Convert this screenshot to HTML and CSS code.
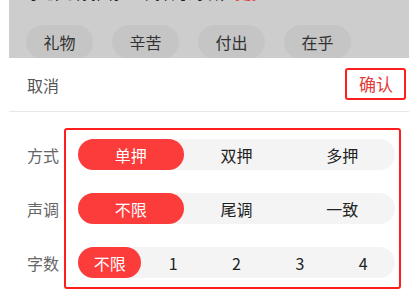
FILE: index.html
```html
<!DOCTYPE html>
<html lang="zh">
<head>
  <meta charset="UTF-8">
  <title>押韵筛选</title>
  <link rel="stylesheet" href="styles.css">
</head>
<body>

<div class="phone">
  <div class="backdrop">
    <div class="intro">小编为你推荐以下押韵词语，<span class="hot">更多</span></div>
    <div class="tags">
      <span class="tag">礼物</span>
      <span class="tag">辛苦</span>
      <span class="tag">付出</span>
      <span class="tag">在乎</span>
    </div>
  </div>

  <div class="sheet">
    <div class="sheet-head">
      <span class="cancel">取消</span>
      <span class="confirm">确认</span>
    </div>

    <div class="sheet-body">
      <div class="row">
        <span class="label">方式</span>
        <div class="track cols-3">
          <span class="opt on">单押</span>
          <span class="opt">双押</span>
          <span class="opt">多押</span>
        </div>
      </div>
      <div class="row">
        <span class="label">声调</span>
        <div class="track cols-3">
          <span class="opt on">不限</span>
          <span class="opt">尾调</span>
          <span class="opt">一致</span>
        </div>
      </div>
      <div class="row">
        <span class="label">字数</span>
        <div class="track cols-5">
          <span class="opt on">不限</span>
          <span class="opt">1</span>
          <span class="opt">2</span>
          <span class="opt">3</span>
          <span class="opt">4</span>
        </div>
      </div>

      <div class="mark"></div>
    </div>
  </div>
</div>

</body>
</html>
```

FILE: styles.css
```css
body {
  margin: 0;
  background: #fff;
  font-family: "Noto Sans CJK SC", "Noto Sans", sans-serif;
}
.phone { margin-left: 9px; width: 400px; height: 298px; overflow: hidden; }

.backdrop { background: #cdcdcd; height: 58px; overflow: hidden; }
.intro {
  margin-top: -17px; padding-left: 18px;
  font-size: 16px; line-height: 18px; color: #222; white-space: nowrap;
}
.intro .hot { color: #e53a3a; }
.tags { display: flex; gap: 19px; padding: 24px 0 0 17px; }
.tag {
  width: 67px; height: 34px; border-radius: 17px;
  background: #c5c5c5; color: #333; font-size: 16px;
  display: flex; align-items: center; justify-content: center;
}

.sheet { background: #fff; border-radius: 16px 16px 0 0; height: 240px; }
.sheet-head {
  height: 53px; border-bottom: 1px solid #e8e8e8;
  display: flex; align-items: center; justify-content: space-between;
  padding: 0 3px 0 18px;
}
.cancel { font-size: 16px; color: #555; }
.confirm {
  font-size: 17px; color: #e53a3a; line-height: 24px;
  padding: 2px 11px 2px 12px; border: 2px solid #ff1e1e; border-radius: 3px;
  margin-top: -1px;
}

.sheet-body {
  position: relative;
  padding: 27px 14px 0 18px;
  display: flex; flex-direction: column; gap: 23px;
}
.row { display: flex; align-items: center; }
.label { width: 51px; font-size: 16px; color: #666; }
.track {
  flex: 1; height: 31px; border-radius: 16px; background: #f4f4f4;
  display: grid;
}
.cols-3 { grid-template-columns: repeat(3, 1fr); }
.cols-5 { grid-template-columns: repeat(5, 1fr); }
.opt {
  display: flex; align-items: center; justify-content: center;
  font-size: 16px; color: #222; border-radius: 16px;
}
.opt.on { background: #fc3b3b; color: #fff; }

.mark {
  position: absolute; left: 55px; top: 16px; width: 333px; height: 157px;
  border: 2px solid #ff1e1e; border-radius: 3px;
}
```
